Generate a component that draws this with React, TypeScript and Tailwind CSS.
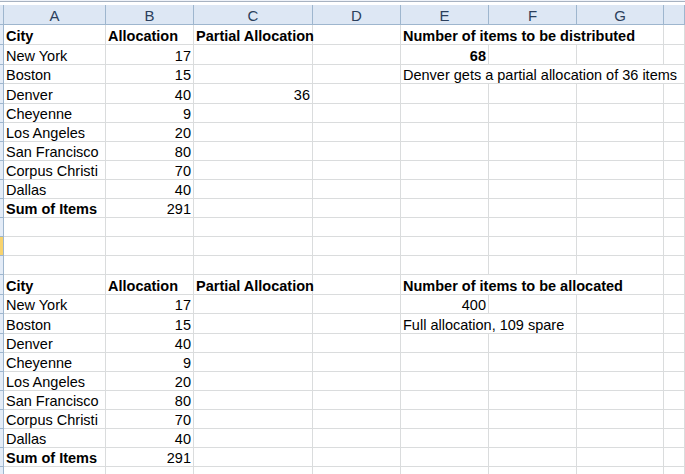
type CellDef = {
  text?: string;
  bold?: boolean;
  right?: boolean;
  span?: 1 | 2 | 3 | 4;
};

const columns = ['A', 'B', 'C', 'D', 'E', 'F', 'G', ''];

const heights = [
  'h-[20px]', 'h-[20px]', 'h-[19px]', 'h-[20px]', 'h-[19px]', 'h-[19px]',
  'h-[19px]', 'h-[19px]', 'h-[19px]', 'h-[19px]', 'h-[19px]', 'h-[19px]',
  'h-[19px]', 'h-[20px]', 'h-[19px]', 'h-[20px]', 'h-[19px]', 'h-[19px]',
  'h-[19px]', 'h-[19px]', 'h-[19px]', 'h-[19px]', 'h-[19px]', 'h-[19px]',
];

const cities: [string, string][] = [
  ['New York', '17'],
  ['Boston', '15'],
  ['Denver', '40'],
  ['Cheyenne', '9'],
  ['Los Angeles', '20'],
  ['San Francisco', '80'],
  ['Corpus Christi', '70'],
  ['Dallas', '40'],
];

const blank = (n: number): CellDef[] => Array.from({ length: n }, () => ({}));

// one block: header row, 8 cities, total row (8 cells each, A..H)
function table(
  label: string,
  total: string,
  partial: string,
  note: string,
  noteSpan: 2 | 4,
  bigBold: boolean,
): CellDef[][] {
  const head: CellDef[] = [
    { text: 'City', bold: true },
    { text: 'Allocation', bold: true },
    { text: 'Partial Allocation', bold: true },
    {},
    { text: label, bold: true, span: 3 },
    {},
  ];
  const body = cities.map(([city, n], i) => {
    const row: CellDef[] = [{ text: city }, { text: n, right: true }];
    row.push(i === 2 && partial ? { text: partial, right: true } : {});
    row.push({});
    if (i === 0) row.push({ text: total, right: true, bold: bigBold }, ...blank(3));
    else if (i === 1) row.push({ text: note, span: noteSpan }, ...blank(4 - noteSpan));
    else row.push(...blank(4));
    return row;
  });
  const sum: CellDef[] = [{ text: 'Sum of Items', bold: true }, { text: '291', right: true }, ...blank(6)];
  return [head, ...body, sum];
}

const rows: CellDef[][] = [
  ...table('Number of items to be distributed', '68', '36', 'Denver gets a partial allocation of 36 items', 4, true),
  blank(8),
  blank(8),
  blank(8),
  ...table('Number of items to be allocated', '400', '', 'Full allocation, 109 spare', 2, false),
  blank(8),
];

const spanClass = { 1: '', 2: 'col-span-2', 3: 'col-span-3', 4: 'col-span-4' };

const gridCols = 'grid grid-cols-[4px_102px_88px_119px_88px_88px_88px_87px_1fr]';

function Cell({ cell }: { cell: CellDef }) {
  return (
    <div
      className={`flex items-end overflow-visible whitespace-nowrap border-r border-b border-[#dadcdd] pl-[2px] pb-[1px] ${
        cell.right ? 'justify-end pr-[2px]' : 'justify-start'
      } ${cell.bold ? 'font-bold' : ''} ${spanClass[cell.span ?? 1]}`}
    >
      {cell.text}
    </div>
  );
}

export default function App() {
  return (
    <div className="h-[474px] w-[685px] overflow-hidden bg-white text-[14.5px] leading-none text-black font-['Liberation_Sans',Arial,sans-serif]">
      <div className="h-[1px] bg-[#eef2f8]" />
      <div className="h-[1px] bg-[#a7b2c1]" />
      <div className="h-[3px] bg-white" />
      <div className={`${gridCols} h-[20px] bg-[#dde7f4]`}>
        <div className="border-r border-b border-[#9eb6ce]" />
        {columns.map((c, i) => (
          <div
            key={i}
            className="flex items-center justify-center border-r border-b border-[#9eb6ce] text-[15px] text-[#2b3f5c] pt-[1px]"
          >
            {c}
          </div>
        ))}
      </div>
      {rows.map((row, r) => (
        <div key={r} className={`${gridCols} ${heights[r]}`}>
          <div
            className={`border-r border-b border-[#9eb6ce] ${
              r === 11 ? 'bg-[#f8d36e]' : 'bg-[#e4ecf7]'
            }`}
          />
          {row.map((cell, c) => (
            <Cell key={c} cell={cell} />
          ))}
        </div>
      ))}
    </div>
  );
}
